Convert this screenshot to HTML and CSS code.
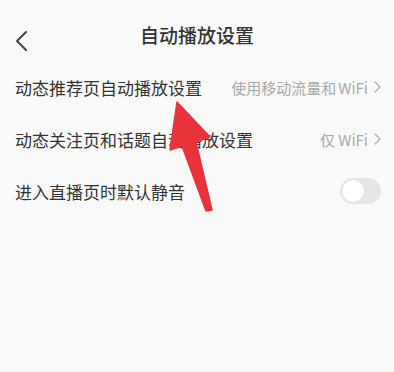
FILE: index.html
```html
<!DOCTYPE html>
<html lang="zh-CN">
<head>
<meta charset="utf-8">
<title>自动播放设置</title>
<link rel="stylesheet" href="styles.css">
</head>
<body>
<div class="page">
  <header class="header">
    <div class="back">
      <svg width="14" height="22" viewBox="0 0 14 22"><path d="M12 2 L3 11 L12 20" fill="none" stroke="#444" stroke-width="2" stroke-linecap="round" stroke-linejoin="round"/></svg>
    </div>
    <h1 class="title">自动播放设置</h1>
    <div></div>
  </header>
  <ul class="list">
    <li class="row">
      <span class="label">动态推荐页自动播放设置</span>
      <span class="value"><span>使用移动流量和<span class="latin">WiFi</span></span><svg class="chev" width="7" height="12" viewBox="0 0 7 12"><path d="M1 1 L6 6 L1 11" fill="none" stroke="#b0b0b0" stroke-width="1.4" stroke-linecap="round" stroke-linejoin="round"/></svg></span>
    </li>
    <li class="row">
      <span class="label">动态关注页和话题自动播放设置</span>
      <span class="value"><span>仅 WiFi</span><svg class="chev" width="7" height="12" viewBox="0 0 7 12"><path d="M1 1 L6 6 L1 11" fill="none" stroke="#b0b0b0" stroke-width="1.4" stroke-linecap="round" stroke-linejoin="round"/></svg></span>
    </li>
    <li class="row">
      <span class="label">进入直播页时默认静音</span>
      <span class="toggle"><span class="knob"></span></span>
    </li>
  </ul>
  <svg class="arrow" width="394" height="372" viewBox="0 0 394 372"><path d="M177 102 L210 137 L196 142 L212 210 L206 211 L182 146 L170 150 Z" fill="#e8333d" stroke="#e8333d" stroke-width="1.5" stroke-linejoin="round"/></svg>
</div>
</body>
</html>
```
FILE: styles.css
```css
html, body {
  margin: 0;
  padding: 0;
  background: #fafafa;
}
body {
  font-family: "Noto Sans CJK SC", "Noto Sans", sans-serif;
  color: #333;
}
.page {
  position: relative;
  width: 394px;
  height: 372px;
  overflow: hidden;
}
.header {
  display: grid;
  grid-template-columns: 1fr auto 1fr;
  align-items: center;
  padding-top: 20px;
  height: 41px;
  box-sizing: content-box;
}
.back {
  padding-left: 14px;
  display: flex;
  align-items: center;
  height: 30px;
}
.title {
  margin: 0;
  font-size: 19px;
  font-weight: 500;
  line-height: 30px;
  color: #333;
  align-self: start;
}
.list {
  list-style: none;
  margin: 0;
  padding: 0;
}
.row {
  height: 52px;
  display: flex;
  align-items: center;
  justify-content: space-between;
  padding: 0 13px 0 15px;
}
.label {
  font-size: 17px;
  color: #333;
}
.value {
  display: flex;
  align-items: center;
  gap: 6px;
  font-size: 15px;
  color: #a8a8a8;
}
.latin {
  margin-left: 2px;
}
.chev {
  display: block;
}
.toggle {
  width: 41px;
  height: 26px;
  border-radius: 13px;
  background: #e6e6e6;
  display: flex;
  align-items: center;
  padding: 0 2px;
  box-sizing: border-box;
}
.knob {
  width: 22px;
  height: 22px;
  border-radius: 50%;
  background: #fff;
  box-shadow: 0 0 1px rgba(0,0,0,0.15);
}
.arrow {
  position: absolute;
  left: 0;
  top: 0;
  pointer-events: none;
}
```
